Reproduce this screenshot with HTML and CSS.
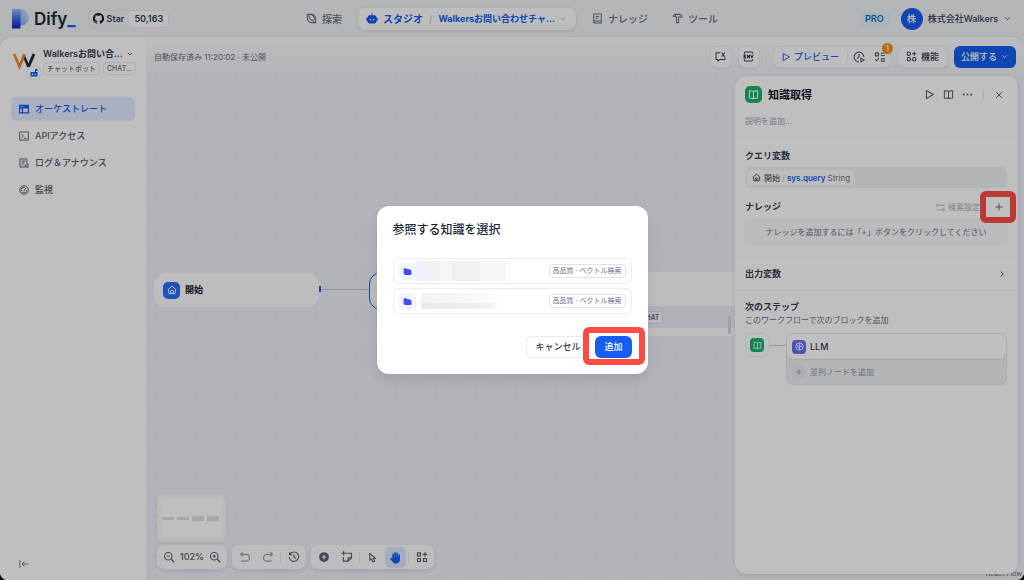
FILE: index.html
```html
<!DOCTYPE html>
<html lang="ja">
<head>
<meta charset="utf-8">
<title>Dify</title>
<link rel="stylesheet" href="styles.css">
</head>
<body>
<svg class="defs" width="0" height="0" aria-hidden="true">
  <defs>
    <linearGradient id="logo-fade" x1="0" y1="1" x2="1" y2="0"><stop offset="0" stop-color="#7ea3f7"/><stop offset="1" stop-color="#dbe6fd"/></linearGradient>
    <linearGradient id="logo-stem" x1="0" y1="0" x2="0" y2="1"><stop offset="0" stop-color="#9dbcf8"/><stop offset=".4" stop-color="#4a76ea"/><stop offset="1" stop-color="#0a22c4"/></linearGradient>
  </defs>
  <symbol id="book" viewBox="0 0 16 16"><path d="M8 3.500C7 2.600 5.500 2.500 2 2.500v10.500c3.500 0 5 0 6 .8 1-.8 2.500-.8 6-.8V2.500c-3.500 0-5 .1-6 1zM8 3.500v10"/></symbol>
  <symbol id="home" viewBox="0 0 16 16"><path d="M2.500 6.500 8 2l5.500 4.500V12a2 2 0 0 1-2 2h-7a2 2 0 0 1-2-2zM5.500 14v-3a2.500 2.500 0 0 1 5 0v3M8 11v3"/></symbol>
  <symbol id="chevron" viewBox="0 0 16 16"><path d="m4 6 4 4 4-4"/></symbol>
  <symbol id="plus" viewBox="0 0 16 16"><path d="M8 2.500v11M2.500 8h11"/></symbol>
  <symbol id="play" viewBox="0 0 16 16"><path d="M3.500 2.200v11.600L13.500 8z"/></symbol>
  <symbol id="folder" viewBox="0 0 16 16"><path d="M1 3.500A1.500 1.500 0 0 1 2.500 2H6l2 2h4a1 1 0 0 1 1 1v.5H4.500A1.500 1.500 0 0 0 3 7v6h-.5A1.500 1.500 0 0 1 1 11.500z"/><path d="M2.500 5.500h11A1.500 1.500 0 0 1 15 7v5.500a1.500 1.500 0 0 1-1.500 1.500H4a1.500 1.500 0 0 1-1.500-1.500z"/></symbol>
  <symbol id="robot" viewBox="0 0 16 16"><path fill-rule="evenodd" d="M7.300.5h1.400v2.500H11a3 3 0 0 1 3 3v.5h1.500v4H14v.5a3 3 0 0 1-3 3H5a3 3 0 0 1-3-3v-.5H.5v-4H2V6a3 3 0 0 1 3-3h2.300zM5.200 8v1.600h1.600V8zM9.200 8v1.600h1.600V8z"/></symbol>
</svg>

<div class="app">
  <header class="header">
    <div class="brand">
      <a class="logo" href="#" aria-label="Dify">
        <svg width="18" height="20" viewBox="0 0 18 20"><path d="M8 0a9 9 0 0 1 9 9c0 4-3 7-9 8z" fill="url(#logo-fade)"/><path d="M0 0h8.500v19.500H0z" fill="url(#logo-stem)"/></svg>
        <span class="logo-text">Dify<span class="logo-bar">_</span></span>
      </a>
      <a class="github" href="#">
        <span class="github-star">
          <svg class="github-icon" width="11" height="11" viewBox="0 0 16 16"><path d="M8 0a8 8 0 0 0-2.530 15.590c.4.070.55-.17.550-.38v-1.490c-2.010.37-2.530-.49-2.690-.94-.09-.23-.48-.94-.82-1.130-.28-.15-.68-.52-.01-.53.630-.01 1.080.58 1.230.82.720 1.210 1.870.87 2.330.66.070-.52.280-.87.510-1.070-1.780-.2-3.640-.89-3.640-3.950 0-.87.310-1.590.82-2.150-.08-.2-.36-1.020.08-2.120 0 0 .67-.21 2.200.82a7.600 7.600 0 0 1 4 0c1.530-1.040 2.200-.82 2.200-.82.440 1.100.16 1.920.08 2.120.510.56.82 1.270.82 2.150 0 3.070-1.870 3.750-3.650 3.950.290.250.54.730.54 1.480v2.200c0 .21.150.46.550.38A8 8 0 0 0 8 0z"/></svg>
          Star
        </span>
        <span class="github-count">50,163</span>
      </a>
    </div>
    <nav class="nav" aria-label="メイン">
      <a class="nav-link" href="#"><svg class="icon" width="11" height="11" viewBox="0 0 16 16"><path d="M2 2h6a6 6 0 0 1 6 6v6H8a6 6 0 0 1-6-6zM4 3.500l1.500 5L12 12.500M8 2.500c3 1 4.500 3.500 4 8"/></svg>探索</a>
      <div class="nav-current">
        <a class="nav-studio" href="#"><svg class="solid" width="12" height="12"><use href="#robot"/></svg>スタジオ</a>
        <span class="slash">/</span>
        <button class="nav-app" type="button">Walkersお問い合わせチャ...<svg class="icon faded" width="8" height="8"><use href="#chevron"/></svg></button>
      </div>
      <a class="nav-link" href="#"><svg class="icon" width="11" height="11" viewBox="0 0 16 16"><path d="M2.500 1.500h11v13h-11zM2.500 11.500h11M5.500 5h5M5.500 7.500h3"/></svg>ナレッジ</a>
      <a class="nav-link" href="#"><svg class="icon" width="11" height="11" viewBox="0 0 16 16"><path d="M2 5V3.500L4.500 2H12l2.500 2.500V6H11L9.500 5.500V14h-3V5.500zM5 2v3.500"/></svg>ツール</a>
    </nav>
    <div class="account">
      <span class="plan">PRO</span>
      <button class="account-menu" type="button"><span class="avatar">株</span>株式会社Walkers<svg class="icon" width="9" height="9"><use href="#chevron"/></svg></button>
    </div>
  </header>

  <div class="body">
    <aside class="sidebar">
      <div class="app-card">
        <div class="app-icon">
          <svg width="24" height="24" viewBox="0 0 24 24"><path d="M16.500 17.500 22 5" fill="none" stroke="#1f2937" stroke-width="3"/><path d="M2 5l5.500 12.500L12 6.500" fill="none" stroke="#f28a1a" stroke-width="2.500"/><path d="M11.500 6l5 12" fill="none" stroke="#1f2937" stroke-width="2.500"/><path d="M12.500 5 9.500 13" fill="none" stroke="#f28a1a" stroke-width="2.500"/></svg>
          <span class="app-kind"><svg class="solid" width="8" height="8" viewBox="0 0 16 16"><path fill-rule="evenodd" d="M10 0h5v4h-3v2h3v9H1V6h9zM4 9v3h2V9zM9 9v3h2V9z"/></svg></span>
        </div>
        <div class="app-info">
          <button class="app-name" type="button">Walkersお問い合...<svg class="icon" width="8" height="8"><use href="#chevron"/></svg></button>
          <div class="tags"><span class="tag">チャットボット</span><span class="tag">CHAT...</span></div>
        </div>
      </div>
      <nav class="side-nav" aria-label="アプリ">
        <a class="side-link active" href="#"><svg class="solid" width="10" height="10" viewBox="0 0 16 16"><path fill-rule="evenodd" d="M0 1h16v14H0zM1.800 7v6.200h2.700V7zM6.500 7v6.200h7.700V7zM2 3v1.500h2V3zM5.500 3v1.500h2V3z"/></svg>オーケストレート</a>
        <a class="side-link" href="#"><svg class="icon" width="10" height="10" viewBox="0 0 16 16"><path d="M1 1.500h14v13H1zM4 5l3 3-3 3M8 11.500h4"/></svg>APIアクセス</a>
        <a class="side-link" href="#"><svg class="icon" width="10" height="10" viewBox="0 0 16 16"><path d="M12.500 9V1.500h-11v13H12M4 5h6M4 8h5M4 11h3M10 11h2l2.500-2v6L12 13.500h-2z"/></svg>ログ＆アナウンス</a>
        <a class="side-link" href="#"><svg class="icon" width="10" height="10" viewBox="0 0 16 16"><circle cx="8" cy="8" r="6.800"/><path d="m7.500 10 3.500-5M4 10a4.200 4.200 0 0 1 5-6M12.200 8a4 4 0 0 1-.7 2.500M4.500 12.500h7"/></svg>監視</a>
      </nav>
      <button class="collapse" type="button" aria-label="サイドバーを閉じる"><svg class="icon" width="10" height="10" viewBox="0 0 16 16"><path d="M1.500 2v12M15 8H5M9 4 5 8l4 4"/></svg></button>
    </aside>

    <main class="canvas">
      <div class="node start-node"><span class="node-icon blue"><svg class="icon" width="10" height="10"><use href="#home"/></svg></span>開始</div>
      <span class="edge"></span>
      <div class="node model-node"><div class="model-row"><span class="model-tag">CHAT</span></div></div>
      <span class="credit">React Flow</span>

      <div class="topbar">
        <span class="saved">自動保存済み 11:20:02 · 未公開</span>
        <div class="actions">
          <button class="tool-button" type="button" aria-label="会話変数"><svg class="icon" width="11" height="11" viewBox="0 0 16 16"><path d="M7.500 2.500h-6v10H4v2l3-2h7.500v-3M9.500 2.500c2.500 0 2 5.500 5 5.500M14.500 2.500c-2 0-3 5.500-5 5.500"/></svg></button>
          <button class="tool-button" type="button" aria-label="環境変数"><svg class="icon" width="11" height="11" viewBox="0 0 16 16"><path d="M2 4V3a1.500 1.500 0 0 1 1.500-1.500h9A1.500 1.500 0 0 1 14 3v1M2 12v1a1.500 1.500 0 0 0 1.500 1.500h9A1.500 1.500 0 0 0 14 13v-1M4.500 6H1.500v4h3M1.500 8h2.500M6.500 10.500V6l3 4V5.500M11 5.500l2 4.500 2-4.500"/></svg></button>
          <span class="divider"></span>
          <div class="run-group">
            <button class="preview" type="button"><svg class="icon" width="10" height="10"><use href="#play"/></svg>プレビュー</button>
            <span class="divider"></span>
            <button class="plain" type="button" aria-label="実行履歴"><svg class="icon" width="12" height="12" viewBox="0 0 16 16"><path d="M8 14.500A6.500 6.500 0 1 1 14.500 8M8 4v4l-2.500 2M10.500 9.500v5l4.500-2.500z"/></svg></button>
            <button class="plain" type="button" aria-label="チェックリスト"><svg class="icon" width="12" height="12" viewBox="0 0 16 16"><path d="M2 2.500h4v4H2zM2 11l1.500 2L6.500 9.500M9 3h5.500M9 6h5.500M9 10.500h5.500M9 13.500h5.500"/></svg><span class="count">1</span></button>
          </div>
          <button class="feature" type="button"><svg class="icon" width="11" height="11" viewBox="0 0 16 16"><circle cx="4" cy="4" r="2.500"/><circle cx="4" cy="12" r="2.500"/><circle cx="12" cy="12" r="2.500"/><path d="M12 1v6M9 4h6"/></svg>機能</button>
          <button class="publish" type="button">公開する<svg class="icon" width="9" height="9"><use href="#chevron"/></svg></button>
        </div>
      </div>

      <div class="workspace">
        <div class="dock">
          <div class="minimap"><div class="minimap-view"><i class="thin"></i><i class="thin"></i><i></i><i></i></div></div>
          <div class="dock-row">
            <div class="dock-group zoom-group">
              <button class="dock-button" type="button" aria-label="縮小"><svg class="icon" width="12" height="12" viewBox="0 0 16 16"><circle cx="7" cy="7" r="5"/><path d="m11 11 4 4M5 7h4"/></svg></button>
              <span>102%</span>
              <button class="dock-button" type="button" aria-label="拡大"><svg class="icon" width="12" height="12" viewBox="0 0 16 16"><circle cx="7" cy="7" r="5"/><path d="m11 11 4 4M5 7h4M7 5v4"/></svg></button>
            </div>
            <div class="dock-group">
              <button class="dock-button muted" type="button" aria-label="元に戻す"><svg class="icon" width="12" height="12" viewBox="0 0 16 16"><path d="M5 1.500 2 4.500l3 3M2 4.500h7.500a4.500 4.500 0 0 1 0 9H3"/></svg></button>
              <button class="dock-button muted" type="button" aria-label="やり直し"><svg class="icon" width="12" height="12" viewBox="0 0 16 16"><path d="m11 1.500 3 3-3 3M14 4.500H6.500a4.500 4.500 0 0 0 0 9H13"/></svg></button>
              <span class="divider"></span>
              <button class="dock-button" type="button" aria-label="履歴"><svg class="icon" width="12" height="12" viewBox="0 0 16 16"><path d="M2.500 4.500A6.300 6.300 0 1 1 1.700 8M2 1.500v3.500h3.500M8 4.500V8l2.500 2"/></svg></button>
            </div>
            <div class="dock-group">
              <button class="dock-button" type="button" aria-label="ブロックを追加"><svg class="solid" width="12" height="12" viewBox="0 0 16 16"><path fill-rule="evenodd" d="M8 1.500a6.500 6.500 0 1 0 0 13 6.500 6.500 0 0 0 0-13zM7.200 5h1.600v2.200H11v1.600H8.800V11H7.200V8.800H5V7.200h2.200z"/></svg></button>
              <button class="dock-button" type="button" aria-label="メモを追加"><svg class="icon" width="12" height="12" viewBox="0 0 16 16"><path d="M7 3h7v6l-4.500 4.500H3V8M14 9H9.500v4.500M3.500 0v6M.5 3h6"/></svg></button>
              <span class="divider"></span>
              <button class="dock-button" type="button" aria-label="ポインター"><svg class="icon" width="11" height="11" viewBox="0 0 16 16"><path d="M4 2v10l2.500-2 2 4.500L11 13.500 9 9.500h3.500z"/></svg></button>
              <button class="dock-button selected" type="button" aria-label="ハンド"><svg class="solid" width="13" height="13" viewBox="0 0 16 16"><path d="M4 10V4a1 1 0 0 1 2 0v3h.5V2.300a1 1 0 0 1 2 0V7H9V2.800a1 1 0 0 1 2 0V7.500h.5V5a1 1 0 0 1 2 0v5a5 5 0 0 1-9 3.500L1.700 9.800a1 1 0 0 1 1.600-1.200z"/></svg></button>
              <span class="divider"></span>
              <button class="dock-button" type="button" aria-label="整列"><svg class="icon" width="12" height="12" viewBox="0 0 16 16"><path d="M2 2.500h4v4H2zM2 10h4v4H2zM10 10h4v4h-4zM12 1.500v6M9 4.500h6"/></svg></button>
            </div>
          </div>
        </div>

        <section class="panel" aria-label="知識取得">
          <div class="panel-head">
            <div class="panel-title">
              <span class="node-icon green"><svg class="icon" width="11" height="11"><use href="#book"/></svg></span>
              <h2>知識取得</h2>
              <button class="plain" type="button" aria-label="実行"><svg class="icon" width="11" height="11"><use href="#play"/></svg></button>
              <button class="plain" type="button" aria-label="ヘルプ"><svg class="icon" width="11" height="11"><use href="#book"/></svg></button>
              <button class="plain" type="button" aria-label="その他"><svg class="solid" width="11" height="11" viewBox="0 0 16 16"><circle cx="2.500" cy="8" r="1.500"/><circle cx="8" cy="8" r="1.500"/><circle cx="13.500" cy="8" r="1.500"/></svg></button>
              <span class="divider"></span>
              <button class="plain" type="button" aria-label="閉じる"><svg class="icon" width="10" height="10" viewBox="0 0 16 16"><path d="m3.500 3.500 9 9M12.500 3.500l-9 9"/></svg></button>
            </div>
            <input class="description" type="text" aria-label="説明" placeholder="説明を追加...">
          </div>
          <div class="panel-section fields">
            <div class="field">
              <h3>クエリ変数</h3>
              <div class="variable-box"><span class="variable"><svg class="icon" width="9" height="9"><use href="#home"/></svg>開始<span class="slash">/</span><b>sys.query</b><span class="type">String</span></span></div>
            </div>
            <div class="field">
              <div class="field-head">
                <h3>ナレッジ</h3>
                <button class="search-settings" type="button"><svg class="icon" width="9" height="9" viewBox="0 0 16 16"><circle cx="3" cy="4" r="2"/><circle cx="13" cy="12" r="2"/><path d="M7 4h8M1 12h8"/></svg>検索設定</button>
                <button class="add" type="button" aria-label="ナレッジを追加"><svg class="icon" width="10" height="10"><use href="#plus"/></svg><span class="marker add-marker"></span></button>
              </div>
              <p class="empty">ナレッジを追加するには「+」ボタンをクリックしてください</p>
            </div>
          </div>
          <button class="panel-section output" type="button"><span>出力変数</span><svg class="icon" width="10" height="10" viewBox="0 0 16 16"><path d="m6 4 4 4-4 4"/></svg></button>
          <div class="panel-section next">
            <h3>次のステップ</h3>
            <p>このワークフローで次のブロックを追加</p>
            <div class="steps">
              <span class="step-source"><span class="node-icon small green"><svg class="icon" width="9" height="9"><use href="#book"/></svg></span></span>
              <span class="step-line"></span>
              <div class="step-list">
                <button class="step" type="button"><span class="node-icon small indigo"><svg class="icon" width="9" height="9" viewBox="0 0 16 16"><circle cx="8" cy="8" r="6.500"/><path d="M8 2v12M5 5v4l3 2M11 5v3H8"/></svg></span>LLM</button>
                <button class="step-add" type="button"><span class="step-plus"><svg class="icon" width="8" height="8"><use href="#plus"/></svg></span>並列ノードを追加</button>
              </div>
            </div>
          </div>
        </section>
      </div>
    </main>
  </div>

  <div class="overlay">
    <dialog class="modal" open aria-labelledby="modal-title">
      <h2 id="modal-title">参照する知識を選択</h2>
      <div class="dataset-list">
        <button class="dataset" type="button"><span class="dataset-icon"><svg class="solid" width="9" height="9"><use href="#folder"/></svg></span><span class="mosaic wide"></span><span class="method">高品質 · ベクトル検索</span></button>
        <button class="dataset" type="button"><span class="dataset-icon"><svg class="solid" width="9" height="9"><use href="#folder"/></svg></span><span class="mosaic"></span><span class="method">高品質 · ベクトル検索</span></button>
      </div>
      <div class="modal-actions">
        <button class="cancel" type="button">キャンセル</button>
        <button class="confirm" type="button">追加<span class="marker confirm-marker"></span></button>
      </div>
    </dialog>
  </div>
</div>
</body>
</html>
```
FILE: styles.css
```css
* { box-sizing: border-box; }
body {
  margin: 0;
  background: #060c06;
  color: #354052;
  font: 9px/12px Inter, "Noto Sans CJK JP", sans-serif;
}
.defs { position: absolute; }
button, input { font: inherit; color: inherit; border: 0; padding: 0; background: none; }
button { display: flex; align-items: center; cursor: pointer; }
a { color: inherit; text-decoration: none; }
h2, h3, p { margin: 0; }
svg { display: block; flex: none; }
.icon { fill: none; stroke: currentColor; stroke-width: 1.500; stroke-linejoin: round; }
.solid { fill: currentColor; }
.divider { width: 1px; height: 10px; background: #e4e7ec; flex: none; }
.slash { color: #b6bcc8; font-weight: 400; }

.app {
  position: relative;
  display: flex;
  flex-direction: column;
  height: 100vh;
  overflow: hidden;
  border-radius: 0 0 8px 8px;
  background: #f1f3f6;
}

/* Header */
.header {
  display: grid;
  grid-template-columns: 1fr auto 1fr;
  align-items: center;
  height: 37px;
  padding: 0 12px;
  flex: none;
}
.brand, .logo, .github, .nav, .nav-link, .nav-current, .nav-studio, .account, .account-menu { display: flex; align-items: center; }
.brand { gap: 12px; }
.logo { gap: 4px; }
.logo-text { color: #1d2939; font-size: 17px; line-height: 20px; font-weight: 600; }
.logo-bar { color: #155eef; font-weight: 800; }
.github { height: 18px; border: 1px solid #e6e8ec; border-radius: 5px; overflow: hidden; font-weight: 600; }
.github-star { display: flex; align-items: center; gap: 3px; padding: 0 5px 0 4px; }
.github-icon { fill: #1b1f24; }
.github-count { padding: 0 5px; line-height: 18px; background: #fcfcfd; }
.nav { gap: 16px; font-size: 10px; color: #676f83; font-weight: 500; }
.nav-link { gap: 5px; }
.nav-current {
  gap: 6px;
  height: 22px;
  padding: 0 9px 0 8px;
  border-radius: 8px;
  background: #fcfcfd;
  box-shadow: 0 1px 4px #1018281f;
  color: #155eef;
  font-weight: 700;
}
.nav-studio { gap: 5px; }
.nav-app { gap: 4px; font-size: 9px; font-weight: 700; }
.nav-current + .nav-link { margin-right: 8px; }
.faded { opacity: .5; }
.account { justify-content: flex-end; gap: 11px; }
.plan { padding: 1px 6px; border-radius: 4px; background: #e0f2fe; color: #0277ad; font-weight: 600; }
.account-menu { gap: 5px; font-weight: 500; }
.avatar { width: 22px; line-height: 22px; border-radius: 50%; background: #155eef; color: #fff; text-align: center; }

.body {
  display: flex;
  flex: 1;
  min-height: 0;
  border-radius: 12px 12px 0 0;
  overflow: hidden;
  box-shadow: 0 0 2px #10182826;
}

/* Sidebar */
.sidebar { display: flex; flex-direction: column; width: 146px; flex: none; padding: 11px 11px; background: #fff; }
.app-card { display: flex; gap: 6px; }
.app-icon { position: relative; padding: 1px; }
.app-kind {
  position: absolute;
  right: -3px;
  top: 19px;
  padding: 2px;
  border-radius: 4px;
  background: #fff;
  box-shadow: 0 0 2px #10182833;
  color: #155eef;
}
.app-info { display: flex; flex-direction: column; gap: 2px; min-width: 0; }
.app-name { gap: 3px; font-weight: 600; white-space: nowrap; }
.tags { display: flex; gap: 3px; }
.tag { padding: 0 3px; border: 1px solid #e8eaef; border-radius: 4px; color: #676f83; font-size: 7px; line-height: 11px; font-weight: 500; white-space: nowrap; }
.side-nav { display: flex; flex-direction: column; gap: 3px; margin-top: 22px; }
.side-link { display: flex; align-items: center; gap: 6px; height: 24px; padding: 0 8px; border-radius: 5px; font-weight: 500; color: #566071; }
.side-link.active { background: #e3ebff; color: #155eef; }
.collapse { margin-top: auto; padding: 0 8px; color: #676f83; }

/* Workflow canvas */
.canvas {
  position: relative;
  display: flex;
  flex-direction: column;
  flex: 1;
  min-width: 0;
  background: radial-gradient(circle at 5px 5px, #e5e8ee 1px, transparent 1px) 5px 4px / 10px 10px #eff1f7;
}
.node { position: absolute; display: flex; align-items: center; border-radius: 12px; background: #fcfcfd; }
.start-node { left: 8px; top: 236px; width: 165px; height: 34px; gap: 5px; padding: 0 9px; color: #101828; font-weight: 700; }
.edge { position: absolute; left: 173px; top: 252px; width: 51px; height: 1px; background: #c6cad3; }
.edge::before { content: ""; position: absolute; left: 0; top: -3px; width: 2px; height: 6px; background: #155eef; }
.model-node { left: 223px; top: 235px; width: 370px; height: 64px; background: none; }
.model-node::before { content: ""; position: absolute; left: 0; top: 0; width: 180px; height: 36px; border: 1px solid #155eef; border-radius: 12px; background: #fcfcfd; }
.model-node::after { content: ""; position: absolute; right: 8px; top: 44px; width: 3px; height: 18px; border-radius: 2px; background: #d1d5dc; }
.model-row { display: flex; width: 300px; height: 64px; margin-left: auto; padding-top: 39px; background: linear-gradient(#fcfcfd 34px, #e9edf2 34px 56px, #fcfcfd 56px); }
.model-tag { height: 13px; margin-left: 197px; padding: 0 3px; border: 1px solid #d5d9e0; border-radius: 3px; background: #f9fafb; color: #676f83; font-size: 7px; line-height: 11px; font-weight: 600; }
.credit { position: absolute; right: 2px; bottom: 0; font-size: 7px; color: #676f83; }

.topbar {
  position: relative;
  display: flex;
  align-items: center;
  justify-content: space-between;
  height: 39px;
  padding: 0 8px;
  background: linear-gradient(#fbfcfd, #eff1f700);
}
.saved { font-size: 8px; color: #676f83; }
.actions, .run-group { display: flex; align-items: center; }
.actions { gap: 6px; }
.tool-button, .run-group, .feature { height: 22px; border: 1px solid #eceef2; border-radius: 6px; background: #fcfcfd; box-shadow: 0 1px 1px #1018280d; }
.tool-button { width: 22px; justify-content: center; }
.run-group { gap: 5px; padding: 0 4px 0 7px; }
.run-group .plain + .plain { margin-left: 4px; }
.preview { gap: 3px; color: #155eef; font-weight: 500; margin-right: 3px; }
.plain { position: relative; color: #566071; }
.count { position: absolute; right: -7px; top: -8px; width: 11px; line-height: 11px; border-radius: 50%; background: #f79009; color: #fff; font-size: 7px; font-weight: 600; text-align: center; }
.feature { gap: 4px; padding: 0 8px; font-weight: 500; }
.publish { height: 22px; gap: 3px; padding: 0 7px; border-radius: 6px; background: #155eef; color: #fff; font-weight: 500; }

.workspace { position: relative; display: flex; flex: 1; justify-content: space-between; min-height: 0; padding: 0 6px 6px 11px; }
.dock { display: flex; flex-direction: column; justify-content: flex-end; gap: 3px; padding-bottom: 5px; }
.minimap { width: 69px; height: 48px; padding: 5px 4px; border-radius: 6px; background: #f9f9fa; box-shadow: 0 2px 4px #1018280f; }
.minimap-view { display: flex; align-items: center; gap: 3px; height: 38px; padding: 0 1px; background: #fff; }
.minimap i { width: 12px; height: 5px; background: #e1e1e1; }
.minimap .thin { height: 3px; }
.dock-row { display: flex; gap: 5px; }
.dock-group { display: flex; align-items: center; gap: 2px; height: 24px; padding: 0 2px; border-radius: 7px; background: #fcfcfd; box-shadow: 0 2px 5px #1018281a; color: #566071; }
.zoom-group { gap: 1px; font-weight: 500; }
.zoom-group .dock-button { width: 20px; }
.dock-button { justify-content: center; width: 21px; height: 21px; border-radius: 6px; }
.muted { color: #98a2b3; }
.selected { background: #dce6ff; color: #155eef; }

/* Node settings */
.panel { width: 283px; border-radius: 12px; background: #fff; box-shadow: 0 1px 5px #1018281a; }
.panel h3 { font-size: 9px; font-weight: 700; color: #354052; }
.node-icon { display: flex; align-items: center; justify-content: center; width: 17px; height: 17px; border-radius: 5px; color: #fff; flex: none; }
.node-icon.small { width: 14px; height: 14px; border-radius: 4px; }
.blue { background: #296dff; }
.green { background: #17b26a; }
.indigo { background: #6172f3; }
.panel-head { padding: 10px 14px 10px 10px; border-bottom: 1px solid #f3f4f6; }
.panel-title { display: flex; align-items: center; gap: 8px; color: #566071; }
.panel-title h2 { flex: 1; font-size: 11px; line-height: 16px; color: #101828; margin-left: -2px; }
.panel-title .divider { margin: 0 2px; }
.description { width: 100%; margin-top: 12px; height: 12px; font-size: 8px; display: block; }
.description::placeholder { color: #98a2b3; opacity: 1; }
.panel-section { padding: 12px 11px 12px 10px; border-bottom: 1px solid #f3f4f6; }
.fields { display: flex; flex-direction: column; gap: 13px; }
.variable-box { margin-top: 5px; padding: 3px; border-radius: 6px; background: #f0f2f5; }
.variable { display: inline-flex; align-items: center; gap: 2px; height: 15px; padding: 0 4px; border-radius: 4px; background: #fcfcfd; font-size: 8px; vertical-align: top; }
.variable .icon { margin-right: 1px; }
.variable b { color: #155eef; font-weight: 600; }
.variable .type { color: #676f83; }
.field-head { display: flex; align-items: center; }
.field-head h3 { flex: 1; }
.search-settings { gap: 3px; margin-right: 14px; font-size: 8px; color: #a5adba; }
.add { position: relative; margin-right: 3px; color: #566071; }
.empty { margin-top: 6px; padding: 7px; border-radius: 6px; background: #f9fafb; font-size: 8px; text-align: center; color: #676f83; }
.output { display: flex; justify-content: space-between; width: 100%; height: 33px; padding: 0 11px 0 10px; font-weight: 700; }
.panel-section.next { border: 0; padding-top: 10px; }
.next p { margin-top: 1px; font-size: 8px; color: #676f83; }
.steps { display: flex; align-items: flex-start; margin-top: 7px; }
.step-source { padding: 4px; border: 1px solid #eff1f4; border-radius: 6px; }
.step-line { width: 17px; height: 1px; margin-top: 12px; background: #c6cad3; }
.step-list { flex: 1; border: 1px solid #e4e7ec; border-radius: 7px; background: #f0f2f5; }
.step, .step-add { width: 100%; height: 25px; gap: 4px; padding: 0 5px; border-radius: 6px; }
.step { background: #fff; box-shadow: 0 1px 1px #1018281a; font-weight: 500; }
.step-add { font-size: 8px; color: #8a93a5; border-top: 1px dashed #dfe2e8; }
.step-plus { padding: 3px; border-radius: 4px; background: #e8ebf0; }

/* Dialog */
.overlay { position: absolute; inset: 0; display: flex; align-items: center; justify-content: center; background: #00000040; }
.modal { position: static; width: 271px; margin: 0; padding: 16px; border: 0; border-radius: 12px; background: #fff; color: inherit; box-shadow: 0 6px 12px #1018281a; }
.modal h2 { font-size: 12px; line-height: 16px; font-weight: 500; color: #1d2939; }
.dataset-list { display: flex; flex-direction: column; gap: 4px; margin-top: 20px; }
.dataset { width: 100%; height: 26px; padding: 0 5px; border: 1px solid #eaecf0; border-radius: 6px; }
.dataset-icon { padding: 4px; border-radius: 4px; background: #f0f4ff; color: #444ce7; }
.mosaic { width: 76px; height: 16px; margin-left: 5px; background: linear-gradient(90deg, #f3f3f3, #f7f7f7 60%, #fcfcfc) 0 0 / 100% 10px no-repeat, linear-gradient(90deg, #e7e7f2 6px, #e9e9eb 6px, #f1f1f1 90%, #fafafa) 0 100% / 100% 6px no-repeat; }
.mosaic.wide { width: 96px; height: 20px; margin-left: 0; background: linear-gradient(90deg, #f0f0ff 8px, #f1f1f2 8px 22px, #f5f5f5 22px 36px, #eff1f1 36px 64px, #f6f6f6 64px 90px, #fcfcfc 90px); }
.method { margin-left: auto; padding: 0 3px; border: 1px solid #dfe2e8; border-radius: 4px; color: #676f83; font-size: 7px; line-height: 12px; }
.modal-actions { display: flex; justify-content: flex-end; gap: 6px; margin-top: 22px; }
.cancel, .confirm { height: 22px; padding: 0 9px; border-radius: 6px; font-weight: 500; }
.cancel { padding: 0 8px; border: 1px solid #eaecf0; }
.confirm { position: relative; background: #155eef; color: #fff; }
.marker { position: absolute; border: 6px solid #fb4c46; border-radius: 6px; }
.confirm-marker { inset: -9px -13px -7px -12px; }
.add-marker { inset: -11px -12px -11px -14px; }
```
